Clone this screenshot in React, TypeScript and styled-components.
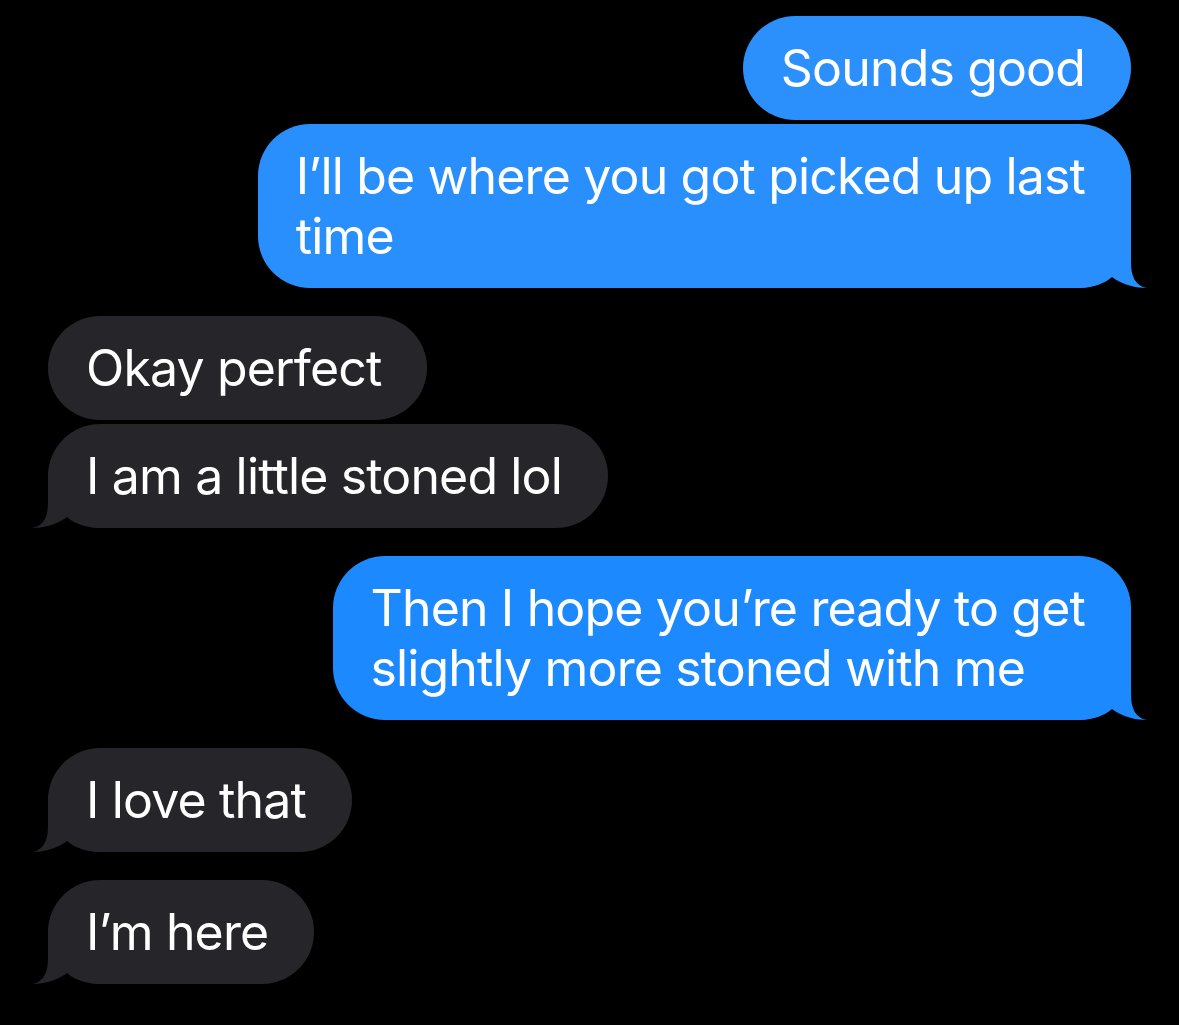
import styled, { createGlobalStyle } from 'styled-components'

const GlobalStyle = createGlobalStyle`
    html, body {
        margin: 0;
        padding: 0;
        background: #000;
    }
    body {
        font-family: Inter, "Noto Sans", "Liberation Sans", sans-serif;
        -webkit-font-smoothing: antialiased;
    }
`

const Thread = styled.div`
    width: 1179px;
    height: 1025px;
    background: #000;
    display: flex;
    flex-direction: column;
    padding: 16px 48px 0;
    box-sizing: border-box;
`

const Row = styled.div<{ $fromMe: boolean; $gap: number }>`
    display: flex;
    justify-content: ${(p) => (p.$fromMe ? 'flex-end' : 'flex-start')};
    margin-top: ${(p) => p.$gap}px;
`

const Bubble = styled.div<{ $bg: string }>`
    position: relative;
    background: ${(p) => p.$bg};
    color: #fff;
    font-size: 50px;
    line-height: 60px;
    letter-spacing: -0.85px;
    padding: 22px 46px 22px 38px;
    border-radius: 52px;
    white-space: nowrap;
`

const Text = styled.div`
    position: relative;
    z-index: 1;
`

const Tail = styled.svg<{ $fromMe: boolean }>`
    position: absolute;
    bottom: 0;
    width: 70px;
    height: 56px;
    z-index: 0;
    ${(p) => (p.$fromMe ? 'right: -16px;' : 'left: -16px; transform: scaleX(-1);')}
`

interface Message {
    fromMe: boolean
    lines: string[]
    tail: boolean
    gap: number
    bg: string
}

const GREY = '#26252a'

const messages: Message[] = [
    { fromMe: true, lines: ['Sounds good'], tail: false, gap: 0, bg: '#2b90fc' },
    { fromMe: true, lines: ['I\u2019ll be where you got picked up last', 'time'], tail: true, gap: 4, bg: '#288ffc' },
    { fromMe: false, lines: ['Okay perfect'], tail: false, gap: 28, bg: GREY },
    { fromMe: false, lines: ['I am a little stoned lol'], tail: true, gap: 4, bg: GREY },
    { fromMe: true, lines: ['Then I hope you\u2019re ready to get', 'slightly more stoned with me'], tail: true, gap: 28, bg: '#1c8afe' },
    { fromMe: false, lines: ['I love that'], tail: true, gap: 28, bg: GREY },
    { fromMe: false, lines: ['I\u2019m here'], tail: true, gap: 28, bg: GREY },
]

function BubbleTail({ fromMe, color }: { fromMe: boolean; color: string }) {
    return (
        <Tail $fromMe={fromMe} viewBox="0 0 70 56">
            <path
                d="M0 0 H54 V30 C54 44 58 54 70 56 C60 56 45 53 35 45 C27 52 15 56 0 56 Z"
                fill={color}
            />
        </Tail>
    )
}

export default function App() {
    return (
        <>
            <GlobalStyle />
            <Thread>
                {messages.map((m, i) => (
                    <Row key={i} $fromMe={m.fromMe} $gap={m.gap}>
                        <Bubble $bg={m.bg}>
                            {m.tail && <BubbleTail fromMe={m.fromMe} color={m.bg} />}
                            {m.lines.map((line, j) => (
                                <Text key={j}>{line}</Text>
                            ))}
                        </Bubble>
                    </Row>
                ))}
            </Thread>
        </>
    )
}
